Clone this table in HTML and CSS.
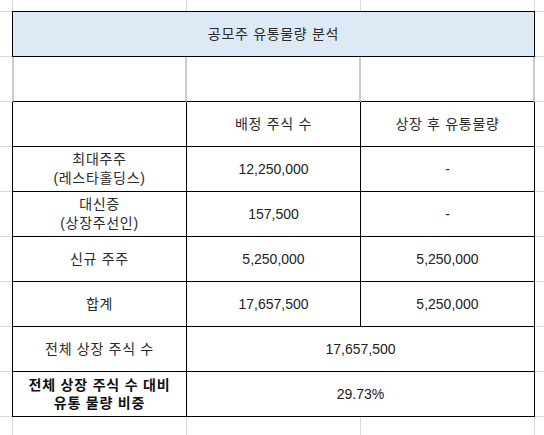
FILE: index.html
```html
<!DOCTYPE html>
<html lang="ko">
<head>
<meta charset="utf-8">
<link rel="stylesheet" href="styles.css">
</head>
<body>
<div class="sheet">
  <div class="grid">
    <div class="cell title span3 top first ko">공모주 유통물량 분석</div>

    <div class="cell blank first"></div>
    <div class="cell blank"></div>
    <div class="cell blank last"></div>

    <div class="cell first"></div>
    <div class="cell ko">배정 주식 수</div>
    <div class="cell ko">상장 후 유통물량</div>

    <div class="cell first ko">최대주주<br>(레스타홀딩스)</div>
    <div class="cell">12,250,000</div>
    <div class="cell">-</div>

    <div class="cell first ko">대신증<br>(상장주선인)</div>
    <div class="cell">157,500</div>
    <div class="cell">-</div>

    <div class="cell first ko">신규 주주</div>
    <div class="cell">5,250,000</div>
    <div class="cell">5,250,000</div>

    <div class="cell first ko">합계</div>
    <div class="cell">17,657,500</div>
    <div class="cell">5,250,000</div>

    <div class="cell first ko">전체 상장 주식 수</div>
    <div class="cell span2">17,657,500</div>

    <div class="cell first ko bold">전체 상장 주식 수 대비<br>유통 물량 비중</div>
    <div class="cell span2">29.73%</div>
  </div>
</div>
</body>
</html>
```

FILE: styles.css
```css
* { box-sizing: border-box; }
html, body { margin: 0; padding: 0; background: #fff; }
.sheet {
  width: 544px;
  height: 435px;
  overflow: hidden;
  padding: 11px 0 0 12px;
  background-color: #fff;
  background-image:
    linear-gradient(to right, #dadada 1px, transparent 1px),
    linear-gradient(to bottom, #dadada 1px, transparent 1px);
  background-size: 174px 45px;
  background-position: 12px 11px;
  font-family: "Liberation Sans", "Noto Sans CJK KR", sans-serif;
  font-size: 14px;
  color: #222;
}
.grid {
  display: grid;
  grid-template-columns: 175px 174px 174px;
  grid-template-rows: 46px repeat(8, 45px);
  width: 523px;
}
.cell {
  display: flex;
  align-items: center;
  justify-content: center;
  text-align: center;
  line-height: 19px;
  background: #fff;
  border-right: 1px solid #000;
  border-bottom: 1px solid #000;
}
.ko { letter-spacing: 0.7px; color: #2a2a2a; }
.first { border-left: 1px solid #000; }
.top { border-top: 1px solid #000; }
.span3 { grid-column: span 3; }
.span2 { grid-column: span 2; }
.title { background: #dde9f5; }
.blank {
  border-right: 2px solid #cccccc;
}
.blank.first { border-left: 2px solid #cccccc; }
.bold { font-weight: bold; line-height: 18px; letter-spacing: 0.8px; color: #111; }
```
